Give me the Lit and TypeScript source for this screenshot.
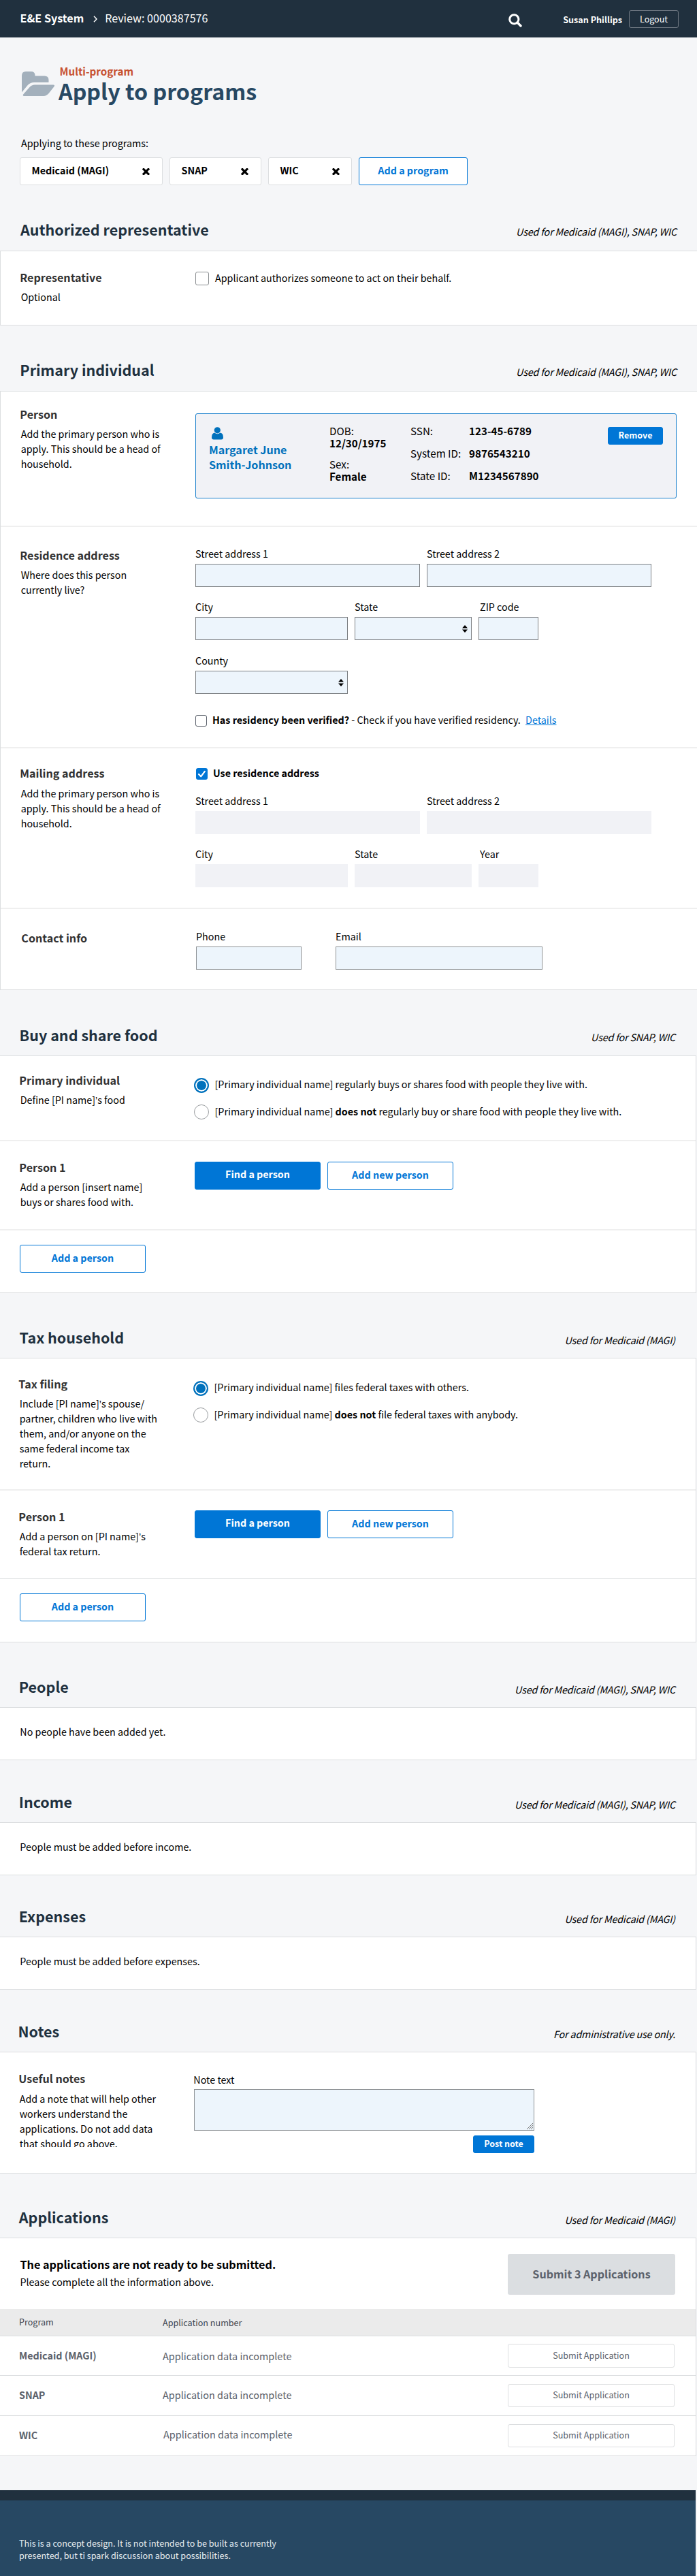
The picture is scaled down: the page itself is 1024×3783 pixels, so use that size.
import { LitElement, html, css, nothing } from "lit";
import { customElement } from "lit/decorators.js";

const cross = html`<svg class="cross" viewBox="0 0 11 10" width="11" height="10">
  <path d="M2.1 1.5 L8.9 8.5 M8.9 1.5 L2.1 8.5" stroke="#000" stroke-width="3.2" stroke-linecap="square" fill="none"/>
</svg>`;

const arrows = html`<svg class="arrows" viewBox="0 0 8 11" width="8" height="11">
  <path d="M4 0 L8 4.6 H0 Z M0 6.4 H8 L4 11 Z" fill="#000"/>
</svg>`;

// The CJK face draws this mark full width, so it takes a Latin one.
const apo = html`<span class="apo">’</span>`;

const chip = (name: string, cls: string) => html`<div class="chip ${cls}"><span>${name}</span>${cross}</div>`;

const field = (label: string, cls: string, kind = "text") => html`
  <label class="field ${cls}">
    <span class="label">${label}</span>
    <span class="box ${kind}">${kind === "select" ? arrows : nothing}</span>
  </label>`;

const side = (title: string, text: unknown = "") => html`
  <div class="side">
    <h3>${title}</h3>
    ${text ? html`<p>${text}</p>` : nothing}
  </div>`;

const head = (title: string, note: string) => html`
  <header class="head"><h2>${title}</h2><em>${note}</em></header>`;

const radio = (on: boolean, text: unknown) => html`
  <div class="choice"><i class="radio ${on ? "on" : ""}"></i><span>${text}</span></div>`;

const personButtons = html`
  <div class="main buttons">
    <button class="btn solid wide">Find a person</button>
    <button class="btn line wide">Add new person</button>
  </div>`;

const ALL = "Used for Medicaid (MAGI), SNAP, WIC";
const MAGI = "Used for Medicaid (MAGI)";

@customElement("app-root")
export class AppRoot extends LitElement {
  static styles = css`
    :host {
      display: block;
      width: 1024px;
      background: #f5f6f8;
      color: #000;
      font-family: "Noto Sans CJK SC", "Open Sans", sans-serif;
      font-size: 14.32px;
      line-height: 22px;
      overflow: hidden;
    }
    * { box-sizing: border-box; }
    h1, h2, h3, p { margin: 0; font-weight: 700; }
    p { font-weight: 400; padding-left: 0.7px; }
    svg { display: block; flex: none; }
    button { font-family: inherit; margin: 0; padding: 0; }
    span, em, h1, h2, h3, .btn { white-space: nowrap; }
    .apo { font-family: "Liberation Sans", sans-serif; line-height: 1; }

    .top {
      height: 55px; background: #20303e; color: #fff;
      display: flex; align-items: center; padding: 0 27px 0 29.5px;
    }
    .brand { font-size: 16.12px; font-weight: 700; padding-bottom: 3px; }
    .chev { margin: 1px 11px 0 14px; }
    .review { font-size: 16.12px; flex: 1; padding-bottom: 3px; }
    .search { margin-right: 60px; margin-top: 4px; }
    .user { font-size: 12.6px; font-weight: 700; margin-right: 10px; padding-top: 2px; }
    .logout {
      width: 73px; height: 26px; border: 1px solid #6f7882; border-radius: 3px; background: none;
      color: #fff; font-size: 12.53px; line-height: 24px; margin-top: 1px;
    }

    .intro { height: 313px; padding: 0 30px; display: flex; flex-direction: column; }
    .title { display: flex; margin-top: 39px; height: 62px; }
    .folder { margin: 11px 6px 0 2px; }
    .kicker { font-size: 15.2px; font-weight: 700; color: #c7512f; line-height: 20px; padding-left: 1.5px; }
    h1 { font-size: 32.2px; line-height: 40px; color: #274863; margin-top: -1px; }
    .lead { margin-top: 43px; padding-left: 1px; }
    .chips { display: flex; gap: 10px; margin: 10px 0 0 -1px; }
    .chip {
      height: 41px; border: 1px solid #dcdee0; border-radius: 3px; background: #fff; font-weight: 700;
      display: flex; align-items: center; justify-content: space-between; padding: 0 18px 3px 16.5px;
    }
    .c1 { width: 210px; } .c2 { width: 135px; } .c3 { width: 123px; padding-right: 17px; }
    .cross { margin-top: 4px; }

    .btn {
      height: 41px; border-radius: 3px; border: 1px solid #0076d6; font-size: 14.32px; font-weight: 700;
      line-height: 36px; padding-bottom: 3px; text-align: center; display: block;
    }
    .line { background: #fff; color: #0076d6; }
    .solid { background: #0076d6; color: #fff; line-height: 34px; padding-bottom: 5px; }
    .wide { width: 185px; }
    .prog { width: 160px; }
    .small { height: 26px; font-size: 12.53px; line-height: 22px; padding: 0 0 2px; }

    .head {
      display: flex; justify-content: space-between; align-items: flex-end;
      height: var(--gap, 96px); padding: 0 32px 15px 30px;
    }
    .auth .head, .primary .head { padding-bottom: 16px; padding-right: 30px; }
    .auth .head { margin-top: -96px; }
    h2 { font-size: 21.5px; line-height: 30px; color: #20303e; margin-left: var(--nudge, 0); }
    em { font-style: italic; letter-spacing: -0.16px; }
    .auth em, .primary em, .buy em { margin-bottom: 1px; }
    .panel { background: #fff; border: 1px solid #dcdee0; border-width: 1px 0 1px 1px; }
    .r .panel { border-width: 1px 1px 1px 0; width: 1023px; }

    .row { display: flex; padding-left: 29px; border-bottom: 2px solid #efefef; }
    .row:last-child { border-bottom: 0; }
    .r .row { padding-left: 30px; }
    .side { width: 257px; padding-right: 48px; flex: none; }
    .r .side { margin-left: -1px; }
    h3 { font-size: 16.12px; line-height: 22px; color: #323232; margin: 0 0 7px -0.7px; }
    .main { flex: 1; }
    .fields { display: flex; gap: 10px; }
    .field { display: block; }
    .label { display: block; margin-bottom: 4px; }
    .box {
      display: flex; align-items: center; justify-content: flex-end; padding-right: 5px;
      height: 34px; border: 1px solid #7c7f82; background: #edf5fc;
    }
    .box.off { border: 0; background: #f1f2f6; }
    .arrows { margin-top: 1px; }
    .w330 { width: 330px; } .w224 { width: 224px; } .w172 { width: 172px; } .w88 { width: 88px; }
    .w88 .label { padding-left: 2px; }
    .w155 { width: 155px; } .w304 { width: 304px; }

    .choice { display: flex; }
    .check { width: 20px; height: 20px; border: 1px solid #8a8d90; border-radius: 3px; background: #fff; margin: 2px 9px 0 0; }
    .check.sm { width: 17px; height: 17px; margin: 4px 8px 0 0; border-color: #5b616b; }
    .checked { margin: 4px 8px 0 1px; }
    a { color: #0076d6; text-decoration: underline; margin-left: 4px; }
    .radio { width: 22px; height: 22px; border: 1px solid #9a9da0; border-radius: 50%; background: #fff; margin: 1px 8.5px 0 -2px; flex: none; }
    .radio.on { border: 2px solid #0071bc; background: #0071bc; box-shadow: inset 0 0 0 2px #fff; margin-top: 2px; }

    .auth .row { height: 108px; }
    .auth .side { padding-top: 27px; }
    .auth .main { padding-top: 28px; }

    .person { height: 199px; }
    .person .side { padding-top: 22px; }
    .person .main { padding: 32px 30px 0 0; }
    .card {
      height: 125px; border: 1px solid #1b80cc; border-radius: 3px; background: #f1f2f6;
      display: flex; align-items: flex-start; padding: 0 19px;
    }
    .name { width: 177px; color: #0071bc; font-size: 16.12px; font-weight: 700; padding-top: 19px; }
    .name svg { margin: 0 0 3px 4px; }
    .name span { display: block; }
    .bio, .ids { font-size: 15.2px; }
    .bio { width: 119px; padding-top: 15px; line-height: 18px; }
    .bio span, .bio b { display: block; }
    .bio .gap { margin-top: 13px; }
    .ids { display: grid; grid-template-columns: 86px auto; row-gap: 11px; padding-top: 13px; flex: 1; }
    .remove { width: 81px; margin-top: 19px; }

    .home { height: 325px; }
    .home .side { padding-top: 30px; }
    .home .main { padding-top: 28px; }
    .home .f2 { margin-top: 18px; }
    .home .f3 { margin-top: 19px; }
    .home .choice { margin-top: 27px; }

    .mail { height: 236px; }
    .mail .side { padding-top: 25px; }
    .mail h3 { margin-bottom: 8px; }
    .mail .main { padding-top: 25px; }
    .mail .f1 { margin-top: 19px; }
    .mail .f2 { margin-top: 18px; }
    .mail .choice { height: 22px; }

    .contact { height: 118px; }
    .contact .side { padding: 31px 0 0 2px; }
    .contact .main { padding: 29px 0 0 1px; }
    .contact .fields { gap: 50px; }
    .contact .box { border-color: #8d9194; }

    .pi { height: 125px; }
    .pi .side { padding-top: 24px; }
    .pi .main { padding-top: 30px; }
    .pi .main, .filing .main { display: flex; flex-direction: column; gap: 18px; }
    .pi .choice, .filing .choice { height: 22px; }
    .pi .choice { margin-left: 1px; }
    .p1 { height: 131px; }
    .p1 .side { padding-top: 27px; }
    .buttons { display: flex; gap: 10px; padding-top: 30px; }
    .add { height: 91px; padding-top: 21px; }
    .r .add { padding-left: 29px; }

    .tax .side { margin-left: -2px; margin-right: 1px; }
    .filing { height: 194px; }
    .filing .side { padding-top: 26px; }
    .filing .main { padding-top: 31px; }
    .tax .p1 { height: 130px; border-bottom: 1px solid #dcdee0; }
    .tax .buttons { padding-top: 29px; }
    .tax .add { height: 92px; }

    .empty { height: 78px; padding: 24px 29.3px 0; }

    .notes .row { height: 177px; padding-left: 29px; }
    .notes .side { padding-top: 27px; }
    .notes h3 { margin-bottom: 8px; }
    .notes p { height: 82px; overflow: hidden; }
    .notes .main { padding-top: 29px; }
    .notes .label { margin: 0 0 3px -0.7px; }
    .area { display: flex; align-items: flex-end; justify-content: flex-end; width: 500px; height: 61px; border: 1px solid #8d9194; background: #edf5fc; padding: 0 1px 1px 0; }
    .post { width: 90px; margin: 7px 0 0 410px; }

    .ready { display: flex; height: 104px; padding: 23px 30px 0 29.5px; justify-content: space-between; }
    .ready strong { font-size: 16.2px; display: block; margin-top: 4px; }
    .ready p { margin-top: 4px; padding: 0; }
    .bigsubmit { width: 246px; height: 60px; border: 0; border-radius: 3px; background: #dbdee1; color: #5b616b; font-size: 16.12px; font-weight: 700; line-height: 58px; padding-bottom: 2px; }
    .tr { display: grid; grid-template-columns: 211px 507px 245px; padding-left: 28px; height: 59px; border-bottom: 1px solid #dcdee0; color: #5b616b; align-items: start; }
    .tr b, .tr span { margin-top: 17px; }
    .tr span { font-size: 14.45px; }
    .tr:last-child { border-bottom: 0; height: 58px; }
    .tr:last-child span { margin: 16px 0 0 1px; }
    .th { height: 40px; background: #ebebeb; color: #3e4550; grid-template-columns: 211px auto; }
    .tr.th span { margin-top: 8px; font-size: 12.6px; }
    .tr.th span + span { margin-top: 9px; }
    .sub { height: 34px; border: 1px solid #dcdee0; border-radius: 3px; background: #fff; color: #5b616b; font-size: 12.6px; line-height: 30px; padding-bottom: 2px; margin-top: 12px; }
    .m { height: 58px; }
    .m span { margin-top: 18px; }
    .m .sub { margin-top: 11px; height: 35px; line-height: 32px; padding-bottom: 1px; }

    footer { width: 1022px; height: 126px; margin-top: 50px; border-top: 15px solid #20303e; background: #274863; color: #e8ecef; font-size: 12.6px; line-height: 18px; padding: 54px 28px 0; }
    footer span { display: block; }

    .auth, .primary, .buy { --gap: 96px; }
    .tax, .people { --gap: 95px; }
    .income, .notes { --gap: 91px; }
    .expenses { --gap: 90px; }
    .apps { --gap: 94px; }
    .primary { --nudge: -0.7px; }
    .buy, .tax { --nudge: -1.4px; }
    .people, .income, .expenses, .apps { --nudge: -2.2px; }
    .notes { --nudge: -3.5px; }
  `;

  render() {
    return html`
      <nav class="top">
        <span class="brand">E&amp;E System</span>
        <svg class="chev" width="6" height="10" viewBox="0 0 6 10"><path d="M1 0.8 L5 5 L1 9.2" fill="none" stroke="#fff" stroke-width="1.5"/></svg>
        <span class="review">Review: 0000387576</span>
        <svg class="search" width="20" height="20" viewBox="0 0 20 20"><circle cx="8.3" cy="8.3" r="6.6" fill="none" stroke="#fff" stroke-width="3"/><path d="M13 13 L18 18" stroke="#fff" stroke-width="3.4" stroke-linecap="round"/></svg>
        <span class="user">Susan Phillips</span>
        <button class="logout">Logout</button>
      </nav>

      <div class="intro">
        <div class="title">
          <svg class="folder" width="48" height="36" viewBox="0 0 48 36">
            <path fill="#a3b0bc" d="M0 6 Q0 0 6 0 H13.5 Q19.5 0 19.5 5.8 V6.5 H33.5 Q39.5 6.5 39.5 12.5 V16 H18 Q12.5 16 9 19.8 L0 30.5 Z M2.2 33.6 L11.5 23 Q14.5 19.5 19 19.5 H46 Q49.4 19.5 47.2 22.5 L39.5 32.3 Q36.5 36 32 36 H3.5 Q0.8 36 2.2 33.6 Z"/>
          </svg>
          <div><div class="kicker">Multi-program</div><h1>Apply to programs</h1></div>
        </div>
        <span class="lead">Applying to these programs:</span>
        <div class="chips">
          ${chip("Medicaid (MAGI)", "c1")}${chip("SNAP", "c2")}${chip("WIC", "c3")}
          <button class="btn line prog">Add a program</button>
        </div>
      </div>

      <section class="auth">
        ${head("Authorized representative", ALL)}
        <div class="panel"><div class="row">
          ${side("Representative", "Optional")}
          <div class="main"><div class="choice"><i class="check"></i><span>Applicant authorizes someone to act on their behalf.</span></div></div>
        </div></div>
      </section>

      <section class="primary">
        ${head("Primary individual", ALL)}
        <div class="panel">
          <div class="row person">
            ${side("Person", "Add the primary person who is apply. This should be a head of household.")}
            <div class="main"><div class="card">
              <div class="name">
                <svg width="17" height="19" viewBox="0 0 17 19"><circle cx="8.3" cy="4.8" r="4.6" fill="#0071bc"/><path fill="#0071bc" d="M4.2 8.6 Q8.3 12 12.6 8.6 Q17 9.2 17 15.3 Q17 18.5 14 18.5 H3 Q0 18.5 0 15.3 Q0 9.2 4.2 8.6 Z"/></svg>
                <span>Margaret June</span><span>Smith-Johnson</span>
              </div>
              <div class="bio"><span>DOB:</span><b>12/30/1975</b><span class="gap">Sex:</span><b>Female</b></div>
              <div class="ids">
                <span>SSN:</span><b>123-45-6789</b>
                <span>System ID:</span><b>9876543210</b>
                <span>State ID:</span><b>M1234567890</b>
              </div>
              <button class="btn solid small remove">Remove</button>
            </div></div>
          </div>
          <div class="row home">
            ${side("Residence address", "Where does this person currently live?")}
            <div class="main">
              <div class="fields">${field("Street address 1", "w330")}${field("Street address 2", "w330")}</div>
              <div class="fields f2">${field("City", "w224")}${field("State", "w172", "select")}${field("ZIP code", "w88")}</div>
              <div class="fields f3">${field("County", "w224", "select")}</div>
              <div class="choice"><i class="check sm"></i><span><b>Has residency been verified?</b> - Check if you have verified residency. <a>Details</a></span></div>
            </div>
          </div>
          <div class="row mail">
            ${side("Mailing address", "Add the primary person who is apply. This should be a head of household.")}
            <div class="main">
              <div class="choice">
                <svg class="checked" width="17" height="17" viewBox="0 0 17 17"><rect width="17" height="17" rx="3" fill="#0076d6"/><path d="M4 9 L7.2 12.3 L12.8 4.8" fill="none" stroke="#fff" stroke-width="2.2" stroke-linecap="round" stroke-linejoin="round"/></svg>
                <b>Use residence address</b>
              </div>
              <div class="fields f1">${field("Street address 1", "w330", "off")}${field("Street address 2", "w330", "off")}</div>
              <div class="fields f2">${field("City", "w224", "off")}${field("State", "w172", "off")}${field("Year", "w88", "off")}</div>
            </div>
          </div>
          <div class="row contact">
            ${side("Contact info")}
            <div class="main"><div class="fields">${field("Phone", "w155")}${field("Email", "w304")}</div></div>
          </div>
        </div>
      </section>

      <section class="buy r">
        ${head("Buy and share food", "Used for SNAP, WIC")}
        <div class="panel">
          <div class="row pi">
            ${side("Primary individual", html`Define [PI name]${apo}s food`)}
            <div class="main">
              ${radio(true, "[Primary individual name] regularly buys or shares food with people they live with.")}
              ${radio(false, html`[Primary individual name] <b>does not</b> regularly buy or share food with people they live with.`)}
            </div>
          </div>
          <div class="row p1">${side("Person 1", "Add a person [insert name] buys or shares food with.")}${personButtons}</div>
          <div class="row add"><button class="btn line wide">Add a person</button></div>
        </div>
      </section>

      <section class="tax r">
        ${head("Tax household", MAGI)}
        <div class="panel">
          <div class="row filing">
            ${side("Tax filing", html`Include [PI name]${apo}s spouse/ partner, children who live with them, and/or anyone on the same federal income tax return.`)}
            <div class="main">
              ${radio(true, "[Primary individual name] files federal taxes with others.")}
              ${radio(false, html`[Primary individual name] <b>does not</b> file federal taxes with anybody.`)}
            </div>
          </div>
          <div class="row p1">${side("Person 1", html`Add a person on [PI name]${apo}s federal tax return.`)}${personButtons}</div>
          <div class="row add"><button class="btn line wide">Add a person</button></div>
        </div>
      </section>

      <section class="people r">${head("People", ALL)}<div class="panel empty">No people have been added yet.</div></section>
      <section class="income r">${head("Income", ALL)}<div class="panel empty">People must be added before income.</div></section>
      <section class="expenses r">${head("Expenses", MAGI)}<div class="panel empty">People must be added before expenses.</div></section>

      <section class="notes r">
        ${head("Notes", "For administrative use only.")}
        <div class="panel"><div class="row">
          ${side("Useful notes", "Add a note that will help other workers understand the applications. Do not add data that should go above.")}
          <div class="main">
            <span class="label">Note text</span>
            <div class="area"><svg width="9" height="9" viewBox="0 0 9 9"><path d="M0 9 L9 0 M3 9 L9 3 M6 9 L9 6" stroke="#777" stroke-width="1" fill="none"/></svg></div>
            <button class="btn solid small post">Post note</button>
          </div>
        </div></div>
      </section>

      <section class="apps r">
        ${head("Applications", MAGI)}
        <div class="panel">
          <div class="ready">
            <div><strong>The applications are not ready to be submitted.</strong><p>Please complete all the information above.</p></div>
            <button class="bigsubmit">Submit 3 Applications</button>
          </div>
          <div class="tr th"><span>Program</span><span>Application number</span></div>
          ${["Medicaid (MAGI)", "SNAP", "WIC"].map((n) => html`
            <div class="tr ${n[0] === "M" ? "m" : ""}"><b>${n}</b><span>Application data incomplete</span><button class="sub">Submit Application</button></div>`)}
        </div>
      </section>

      <footer><span>This is a concept design. It is not intended to be built as currently</span><span>presented, but ti spark discussion about possibilities.</span></footer>
    `;
  }
}
